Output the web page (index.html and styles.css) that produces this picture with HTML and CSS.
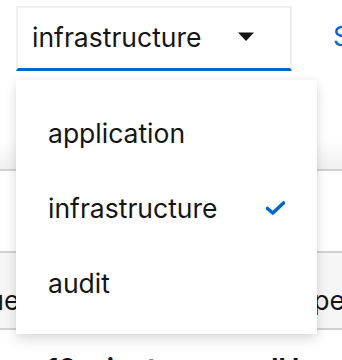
FILE: index.html
```html
<!DOCTYPE html>
<html lang="en">
<head>
    <meta charset="UTF-8">
    <meta name="viewport" content="width=device-width, initial-scale=1.0">
    <title>Log type</title>
    <link rel="stylesheet" href="styles.css">
</head>
<body>
    <div class="toolbar">
        <button class="select-toggle">
            <span class="toggle-text">infrastructure</span>
            <svg class="caret" width="16" height="10" viewBox="0 0 16 10">
                <path d="M0 0.5 H16 L8 9 Z" fill="#151515"/>
            </svg>
        </button>
        <a class="link" href="#">Show all</a>
    </div>

    <div class="table">
        <div class="row head"></div>
        <div class="row"></div>
        <div class="row striped">
            <span class="cell first">Value</span>
            <span class="cell last">Type</span>
        </div>
        <div class="summary">10 minutes ago, all logs loaded</div>
    </div>

    <ul class="menu">
        <li class="item">application</li>
        <li class="item selected">infrastructure
            <svg class="check" width="19" height="14" viewBox="0 0 19 14">
                <path d="M1.5 7.5 L6.8 12 L17.5 2" fill="none" stroke="#0066cc" stroke-width="3.6" stroke-linecap="round" stroke-linejoin="round"/>
            </svg>
        </li>
        <li class="item">audit</li>
    </ul>
</body>
</html>
```
FILE: styles.css
```css
body {
    margin: 0;
    font-family: Inter, "Noto Sans", sans-serif;
    font-size: 26.5px;
    color: #151515;
    background-color: #fff;
    overflow: hidden;
    height: 360px;
    position: relative;
}

.toolbar {
    display: flex;
    align-items: flex-start;
    padding: 6px 0 0 16px;
    white-space: nowrap;
}

.select-toggle {
    flex-shrink: 0;
    display: flex;
    align-items: center;
    width: 276px;
    height: 65px;
    padding: 0 36px 2px 14px;
    font: inherit;
    color: inherit;
    background-color: #fff;
    border: 2px solid #efefef;
    border-bottom: 3px solid #0066cc;
    box-sizing: border-box;
}

.toggle-text {
    flex: 1;
    text-align: left;
}

.caret {
    display: block;
}

.link {
    flex-shrink: 0;
    margin-left: 41px;
    margin-top: 14px;
    color: #0066cc;
    text-decoration: none;
}

.row {
    display: flex;
    align-items: center;
    border-bottom: 2px solid #d2d2d2;
    white-space: nowrap;
}

.head {
    height: 98px;
    background: linear-gradient(#fff 70%, #f0f0f0);
}

.row:nth-child(2) {
    height: 80px;
}

.striped {
    height: 77px;
    padding-top: 18px;
    box-sizing: border-box;
    background-color: #f6f6f6;
}

.first {
    margin-left: -50px;
}

.last {
    margin-left: auto;
    margin-right: -3px;
}

.summary {
    padding: 22px 0 0 47px;
    font-weight: 700;
    white-space: nowrap;
}

.menu {
    position: absolute;
    top: 80px;
    left: 16px;
    width: 301px;
    margin: 0;
    padding: 15px 0 14px;
    list-style: none;
    background-color: #fff;
    box-shadow: 0 6px 12px 0 rgba(3, 3, 3, 0.12), 0 0 6px 0 rgba(3, 3, 3, 0.06);
    box-sizing: border-box;
}

.item {
    display: flex;
    align-items: center;
    justify-content: space-between;
    height: 75px;
    padding: 0 32px;
}

.check {
    display: block;
    margin-top: 1px;
}
```
